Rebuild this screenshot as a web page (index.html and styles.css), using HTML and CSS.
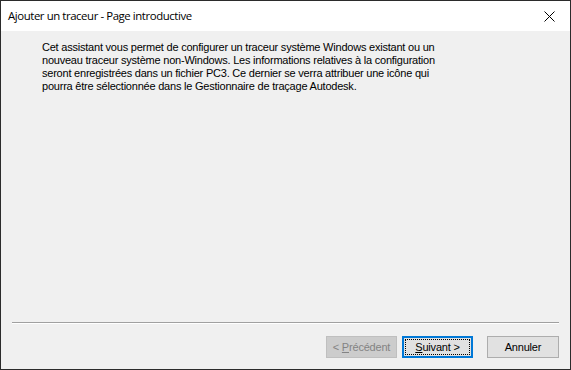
FILE: index.html
```html
<!DOCTYPE html>
<html lang="fr">
<head>
<meta charset="utf-8">
<title>Ajouter un traceur - Page introductive</title>
<link rel="stylesheet" href="styles.css">
</head>
<body>
<div class="window">
  <div class="titlebar">
    <span class="title">Ajouter un traceur - Page introductive</span>
    <span class="close">
      <svg width="11" height="11" viewBox="0 0 11 11"><path d="M0.5 0.5 L10.5 10.5 M10.5 0.5 L0.5 10.5" stroke="#000" stroke-width="1" fill="none"/></svg>
    </span>
  </div>
  <div class="content">
    <p class="intro">Cet assistant vous permet de configurer un traceur système Windows existant ou un<br>nouveau traceur système non-Windows. Les informations relatives à la configuration<br>seront enregistrées dans un fichier PC3. Ce dernier se verra attribuer une icône qui<br>pourra être sélectionnée dans le Gestionnaire de traçage Autodesk.</p>
    <div class="footer">
      <div class="separator"></div>
      <div class="buttons">
        <button class="btn disabled" disabled>&lt; <u>P</u>récédent</button>
        <button class="btn focused"><span class="focus-ring"><u>S</u>uivant &gt;</span></button>
        <button class="btn cancel">Annuler</button>
      </div>
    </div>
  </div>
</div>
</body>
</html>
```

FILE: styles.css
```css
html, body {
  margin: 0;
  padding: 0;
  width: 571px;
  height: 370px;
  overflow: hidden;
  background: #f0f0f0;
}

.window {
  box-sizing: border-box;
  width: 571px;
  height: 370px;
  border: 1px solid #2b2b2b;
  display: flex;
  flex-direction: column;
  background: #f0f0f0;
}

.titlebar {
  height: 30px;
  background: #ffffff;
  display: flex;
  align-items: center;
  justify-content: space-between;
  padding: 0 0 0 7px;
  flex: none;
}

.title {
  font-family: "Open Sans", "Noto Sans", sans-serif;
  font-size: 11.4px;
  color: #000;
  letter-spacing: -0.42px;
  margin-top: -1px;
}

.close {
  width: 46px;
  height: 30px;
  display: flex;
  align-items: center;
  justify-content: center;
  margin-right: -2px;
}

.close svg {
  display: block;
}

.content {
  flex: 1;
  display: flex;
  flex-direction: column;
  font-family: "Liberation Sans", Arial, sans-serif;
  font-size: 11px;
  color: #000;
}

.intro {
  margin: 0;
  padding: 10px 0 0 41px;
  line-height: 13px;
  letter-spacing: -0.22px;
  flex: 1;
}

.footer {
  padding: 0 11px 11px 11px;
}

.separator {
  height: 1px;
  background: #a0a0a0;
  border-bottom: 1px solid #ffffff;
  margin-bottom: 12px;
}

.buttons {
  display: flex;
  justify-content: flex-end;
  align-items: center;
}

.btn {
  box-sizing: border-box;
  height: 22px;
  width: 71px;
  margin: 0;
  padding: 0;
  font-family: "Liberation Sans", Arial, sans-serif;
  font-size: 11px;
  letter-spacing: -0.2px;
  color: #000;
  background: #e1e1e1;
  border: 1px solid #adadad;
  border-radius: 0;
}

.btn u {
  text-decoration: underline;
  text-underline-offset: 1px;
}

.disabled {
  background: #cccccc;
  border-color: #bfbfbf;
  color: #838383;
}

.focused {
  margin-left: 5px;
  border: 2px solid #0078d7;
  padding: 1px;
}

.focus-ring {
  display: flex;
  align-items: center;
  justify-content: center;
  height: 100%;
  border: 1px dotted #000;
  box-sizing: border-box;
}

.cancel {
  margin-left: 14px;
  width: 72px;
}
```
